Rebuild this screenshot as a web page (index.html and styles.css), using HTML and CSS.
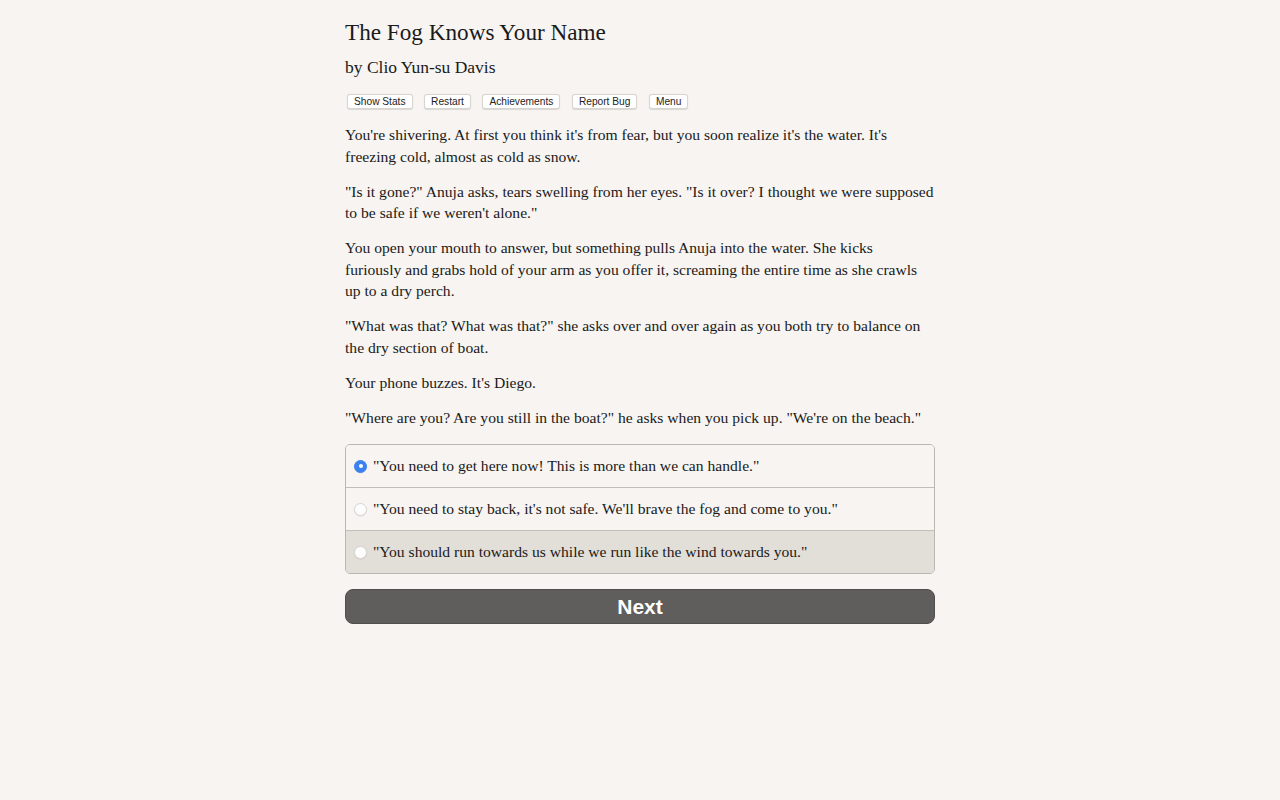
FILE: index.html
```html
<!DOCTYPE html>
<html lang="en">
<head>
<meta charset="utf-8">
<title>The Fog Knows Your Name</title>
<link rel="stylesheet" href="styles.css">
</head>
<body>
<div class="container">
  <header class="header">
    <h1 class="title">The Fog Knows Your Name</h1>
    <h2 class="author">by Clio Yun-su Davis</h2>
    <div class="toolbar">
      <button class="tb-btn">Show Stats</button>
      <button class="tb-btn">Restart</button>
      <button class="tb-btn">Achievements</button>
      <button class="tb-btn">Report Bug</button>
      <button class="tb-btn">Menu</button>
    </div>
  </header>
  <main class="text">
    <p>You're shivering. At first you think it's from fear, but you soon realize it's the water. It's freezing cold, almost as cold as snow.</p>
    <p>"Is it gone?" Anuja asks, tears swelling from her eyes. "Is it over? I thought we were supposed to be safe if we weren't alone."</p>
    <p>You open your mouth to answer, but something pulls Anuja into the water. She kicks<br>furiously and grabs hold of your arm as you offer it, screaming the entire time as she crawls up to a dry perch.</p>
    <p>"What was that? What was that?" she asks over and over again as you both try to balance on the dry section of boat.</p>
    <p>Your phone buzzes. It's Diego.</p>
    <p>"Where are you? Are you still in the boat?" he asks when you pick up. "We're on the beach."</p>
  </main>
  <form class="choice-form">
    <div class="choices">
      <label class="choice">
        <span class="radio checked"></span>
        <span class="choice-text">"You need to get here now! This is more than we can handle."</span>
      </label>
      <label class="choice">
        <span class="radio"></span>
        <span class="choice-text">"You need to stay back, it's not safe. We'll brave the fog and come to you."</span>
      </label>
      <label class="choice hover">
        <span class="radio"></span>
        <span class="choice-text">"You should run towards us while we run like the wind towards you."</span>
      </label>
    </div>
    <button type="button" class="next">Next</button>
  </form>
</div>
</body>
</html>
```

FILE: styles.css
```css
html, body {
  margin: 0;
  padding: 0;
  background: #f7f4f1;
}
body {
  font-family: "Liberation Serif", "Times New Roman", serif;
  color: #1a1a1a;
}
.container {
  width: 590px;
  margin: 0 auto;
  padding-top: 17px;
}
.title {
  font-weight: normal;
  font-size: 23.2px;
  line-height: 30px;
  margin: 0;
}
.author {
  font-weight: normal;
  font-size: 17.5px;
  line-height: 24px;
  margin: 8px 0 0;
}
.toolbar {
  display: flex;
  gap: 11.5px;
  margin-top: 15px;
  padding-left: 2px;
}
.tb-btn {
  font-family: "Liberation Sans", Arial, sans-serif;
  font-size: 10.2px;
  line-height: 13px;
  color: #222;
  background: #fff;
  border: 1px solid #d8d5d1;
  border-radius: 3px;
  padding: 0 6px;
  height: 15px;
  box-shadow: 0 0.5px 1px rgba(0,0,0,0.12);
}
.text {
  margin-top: 15px;
  font-size: 15.6px;
  line-height: 21.5px;
}
.text p {
  margin: 0 0 13.5px;
}
.choice-form {
  margin-top: 16px;
}
.choices {
  border: 1px solid #b9b6b2;
  border-radius: 5px;
  overflow: hidden;
}
.choice {
  display: flex;
  align-items: center;
  height: 42px;
  padding-left: 8px;
  font-size: 15.6px;
  border-top: 1px solid #c2bfbb;
  background: #f7f4f1;
}
.choice:first-child {
  border-top: none;
}
.choice.hover {
  background: #e2ded8;
}
.radio {
  width: 13px;
  height: 13px;
  border-radius: 50%;
  background: #fdfdfd;
  border: 1px solid #d9d6d2;
  margin-right: 6px;
  box-sizing: border-box;
  flex: none;
  box-shadow: 0 0.5px 1px rgba(0,0,0,0.1);
}
.radio.checked {
  background: #3b82f0;
  border-color: #3b82f0;
  position: relative;
}
.radio.checked::after {
  content: "";
  position: absolute;
  left: 3.5px;
  top: 3.5px;
  width: 4px;
  height: 4px;
  border-radius: 50%;
  background: #fff;
}
.next {
  display: block;
  width: 100%;
  height: 35px;
  margin-top: 15px;
  background: #5f5e5c;
  color: #fff;
  border: 1px solid #4f4e4c;
  border-radius: 8px;
  font-family: "Liberation Sans", Arial, sans-serif;
  font-weight: bold;
  font-size: 21px;
}
```
